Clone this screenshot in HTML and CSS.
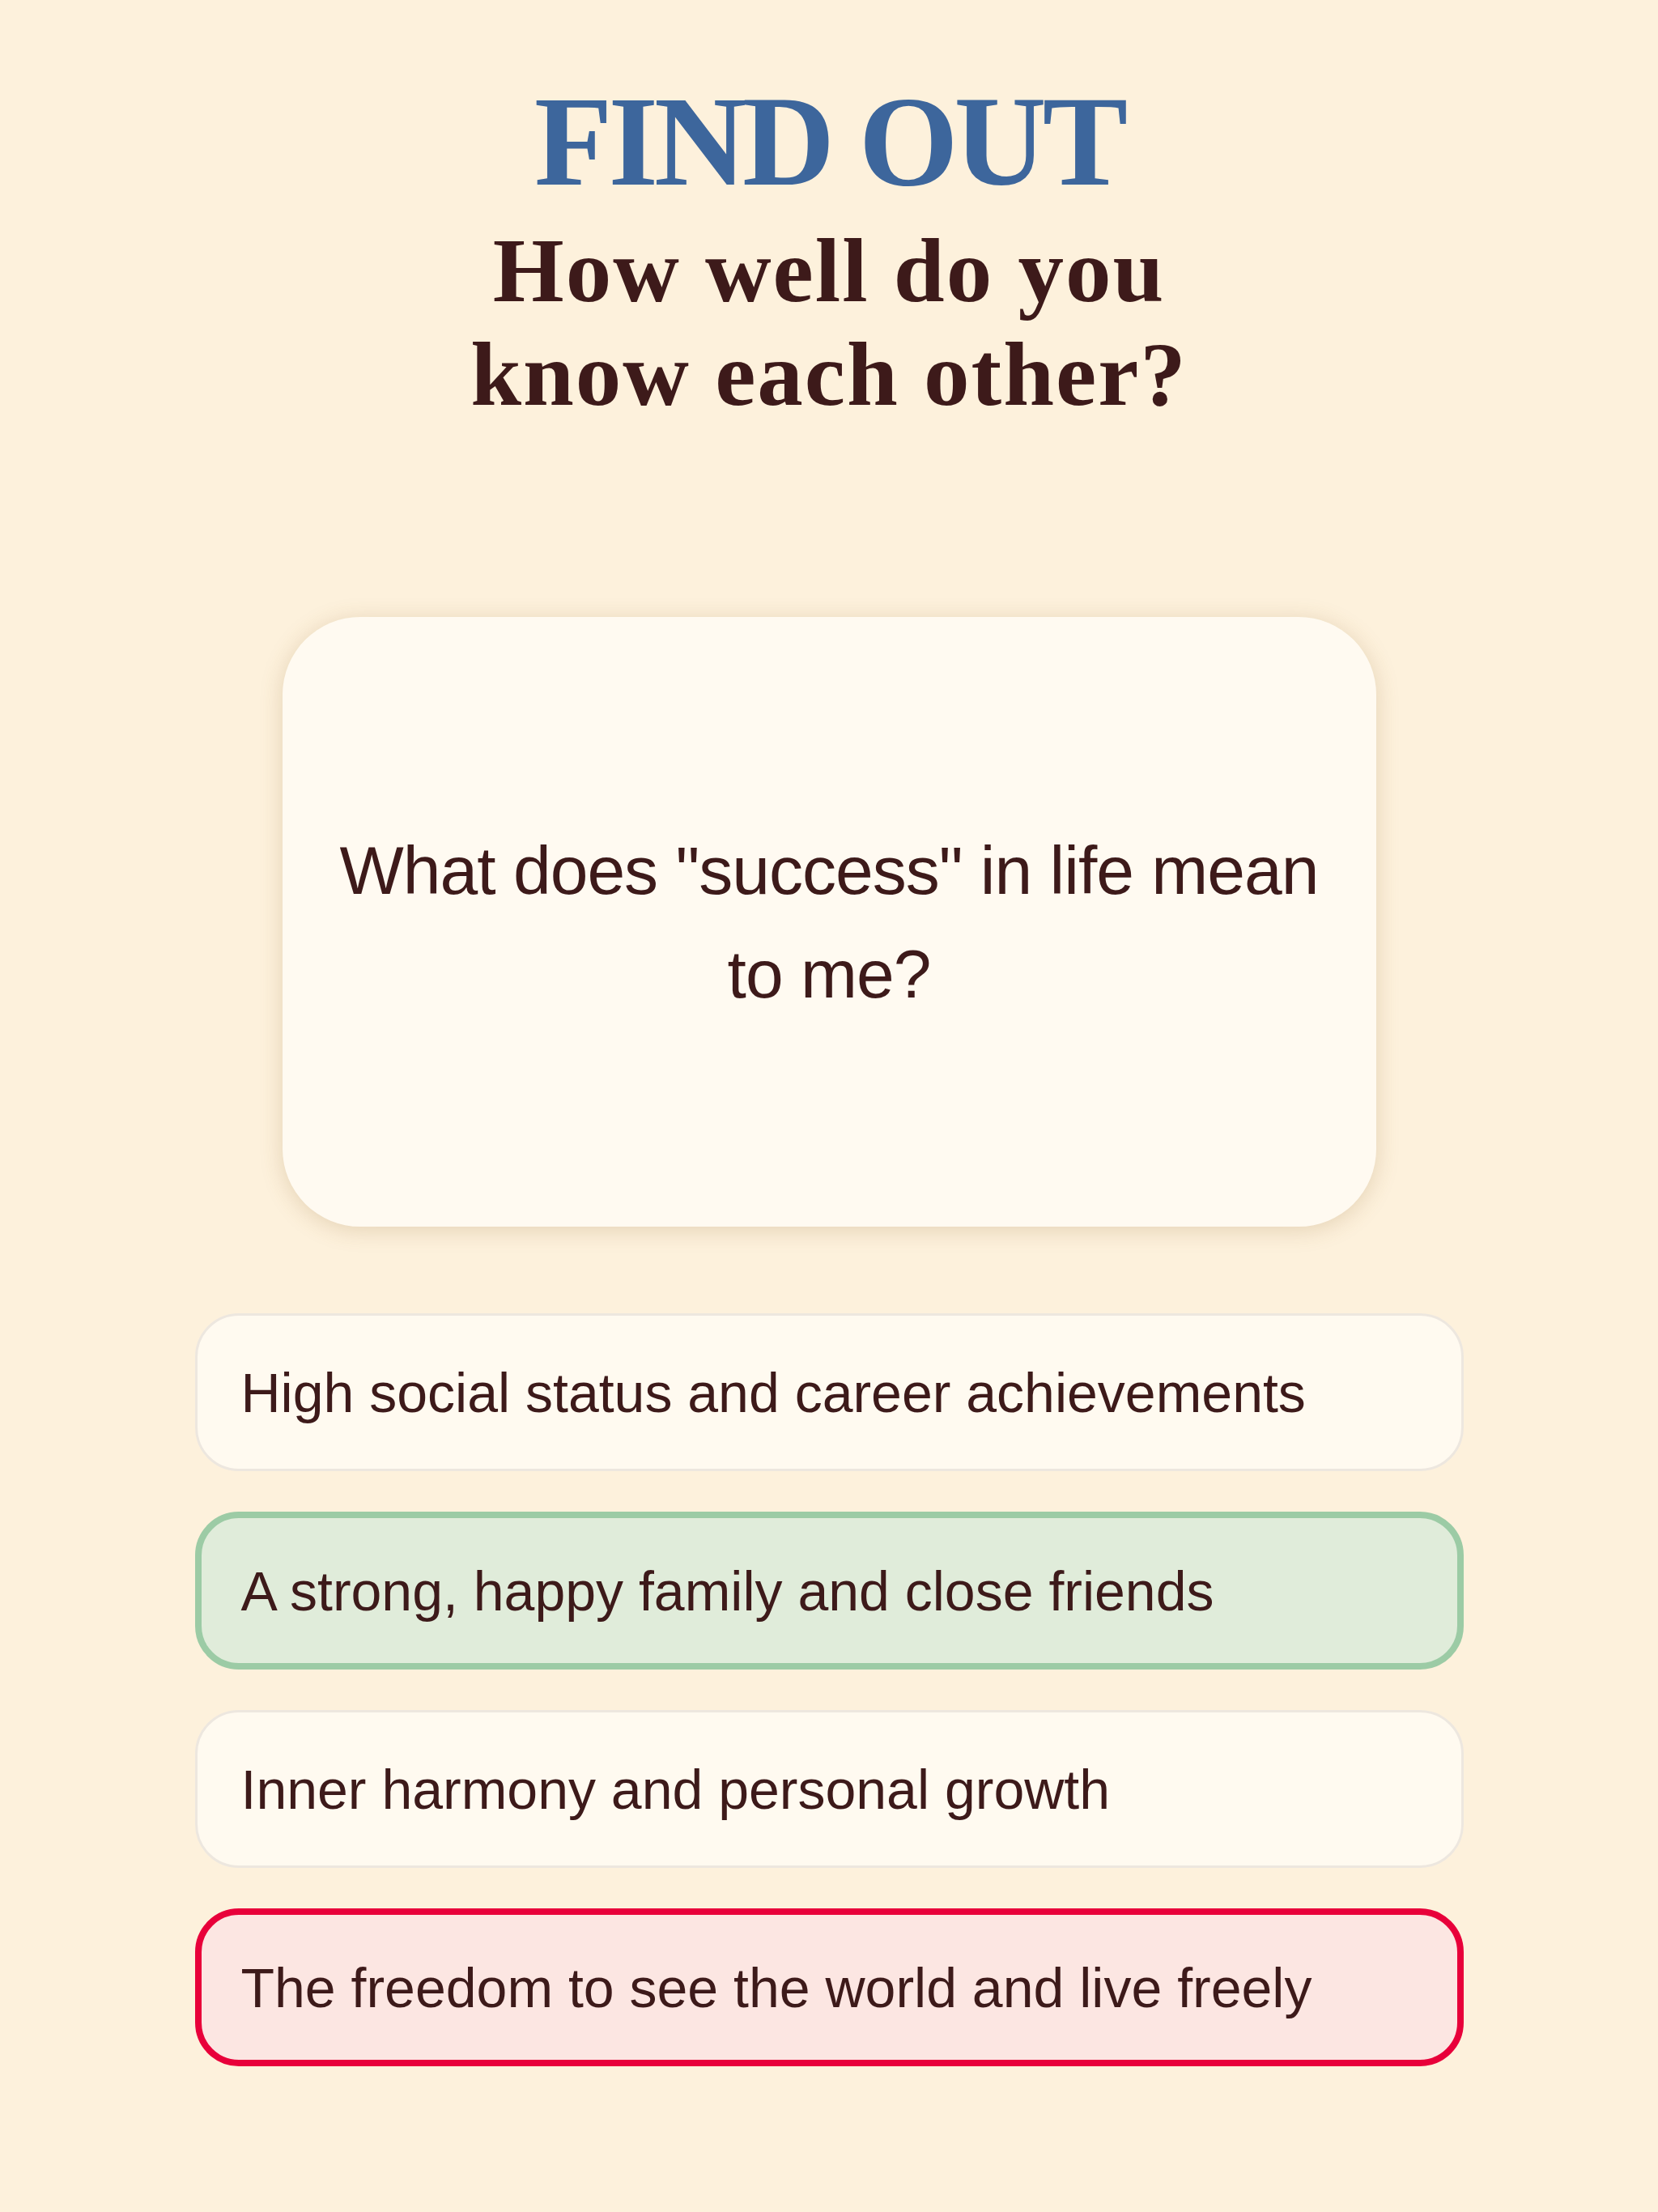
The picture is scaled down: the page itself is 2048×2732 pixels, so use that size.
FILE: index.html
```html
<!DOCTYPE html>
<html lang="en">
<head>
    <meta charset="UTF-8">
    <meta name="viewport" content="width=device-width, initial-scale=1.0">
    <title>Find Out - How well do you know each other?</title>
    <link rel="stylesheet" href="styles.css">
</head>
<body>
    <div class="page">
        <header class="header">
            <h1 class="title">FIND OUT</h1>
            <h2 class="subtitle">How well do you<br>know each other?</h2>
        </header>

        <div class="question-card">
            <p class="question">What does "success" in life mean to me?</p>
        </div>

        <div class="options">
            <div class="option">High social status and career achievements</div>
            <div class="option correct">A strong, happy family and close friends</div>
            <div class="option">Inner harmony and personal growth</div>
            <div class="option wrong">The freedom to see the world and live freely</div>
        </div>
    </div>
</body>
</html>
```

FILE: styles.css
```css
body {
    margin: 0;
    background: #fdf1dc;
    color: #3d1a1a;
    font-family: "Liberation Sans", Arial, sans-serif;
}
.page {
    min-height: 2732px;
    display: flex;
    flex-direction: column;
    align-items: center;
    padding-top: 94px;
    box-sizing: border-box;
}
.header {
    text-align: center;
    font-family: "Liberation Serif", "Times New Roman", serif;
}
.title {
    margin: 0;
    font-size: 158px;
    line-height: 162px;
    font-weight: bold;
    letter-spacing: -5px;
    color: #3d669c;
}
.subtitle {
    margin: 14px 0 0;
    font-size: 113px;
    line-height: 128px;
    font-weight: bold;
    letter-spacing: 2px;
    color: #3d1a1a;
}
.question-card {
    width: 1351px;
    height: 753px;
    margin-top: 236px;
    box-sizing: border-box;
    padding: 0 60px;
    display: flex;
    align-items: center;
    justify-content: center;
    background: #fffaf1;
    border-radius: 96px;
    box-shadow: 0 4px 28px rgba(140, 100, 40, 0.22);
}
.question {
    margin: 0;
    font-size: 84px;
    line-height: 128px;
    letter-spacing: -1px;
    text-align: center;
}
.options {
    width: 1567px;
    margin-top: 107px;
    display: flex;
    flex-direction: column;
    gap: 50px;
}
.option {
    height: 195px;
    box-sizing: border-box;
    display: flex;
    align-items: center;
    padding: 0 54px;
    background: #fffaf0;
    border: 3px solid #ede7df;
    border-radius: 54px;
    font-size: 68px;
}
.option.correct {
    background: #e0ecda;
    border: 8px solid #9ccba5;
    padding: 0 49px;
}
.option.wrong {
    background: #fce6e2;
    border: 8px solid #e8003a;
    padding: 0 49px;
}
```
